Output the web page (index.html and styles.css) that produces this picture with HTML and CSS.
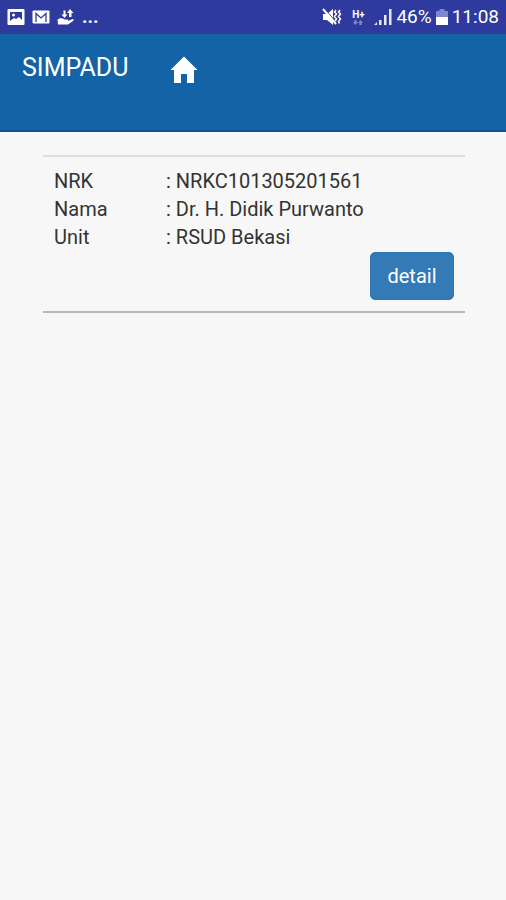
FILE: index.html
```html
<!DOCTYPE html>
<html lang="id">
<head>
    <meta charset="UTF-8">
    <meta name="viewport" content="width=device-width, initial-scale=1.0">
    <title>SIMPADU</title>
    <link rel="stylesheet" href="styles.css">
</head>
<body>

<div class="status-bar">
    <div class="status-left">
        <svg width="18" height="18" viewBox="0 0 18 18">
            <rect x="0.500" y="1" width="17" height="16" rx="1" fill="#fff"/>
            <path d="M3 4h12v8l-3-3-3 2-2-1-4 3z" fill="#2f3a9e"/>
            <circle cx="6.500" cy="7" r="1.500" fill="#fff"/>
        </svg>
        <svg width="18" height="18" viewBox="0 0 18 18">
            <rect x="0.500" y="2.500" width="17" height="13" rx="1" fill="#fff"/>
            <path d="M4 14V5.500l5 4.500 5-4.500V14" fill="none" stroke="#2f3a9e" stroke-width="1.300"/>
        </svg>
        <svg width="18" height="18" viewBox="0 0 18 18" fill="#fff">
            <path d="M0.500 11.500c3-2 5-1.500 7 0h3c1 0 1 1.500 0 1.500h-3.500 4l4.500-2c1.500 0 1.500 1 0.500 2l-5 3.500H1z"/>
            <path d="M8.500 2.500v4h2l-3 3.500-3-3.500h2v-4z"/>
            <path d="M12 9V5h-2l3-4 3.500 4h-2v4z"/>
        </svg>
        <span class="more">...</span>
    </div>
    <div class="status-right">
        <svg width="20" height="18" viewBox="0 0 20 18">
            <path d="M1 6h4l6-5v16l-6-5H1z" fill="#fff"/>
            <path d="M2.500 0.500l12 14" stroke="#2f3a9e" stroke-width="1"/>
            <path d="M1 1l13 15" stroke="#fff" stroke-width="2"/>
            <path d="M14 2l-1.500 2 2 2-2 2.500 2 2.500-1.500 2M18 2l-1.500 2 2 2-2 2.500 2 2.500-2 2.500 1 2" fill="none" stroke="#fff" stroke-width="1.500"/>
        </svg>
        <div class="network">
            <span>H+</span>
            <svg width="10" height="5" viewBox="0 0 10 5" fill="#8189cc">
                <path d="M1.500 0h2v2h1.500L2.500 5 0 2h1.500zM6.500 5h2V3H10L7.500 0 5 3h1.500z"/>
            </svg>
        </div>
        <svg width="18" height="18" viewBox="0 0 18 18" fill="#e6e8f8">
            <path d="M0 17l3-3v3zM5 12h2.500v5H5zM10 7h2.500v10H10zM15 1h2.500v16H15z"/>
        </svg>
        <span class="battery-text">46%</span>
        <svg width="12" height="18" viewBox="0 0 12 18">
            <path d="M3.500 1h5v2H12v14H0V3h3.500z" fill="#7d86cf"/>
            <path d="M0 9h12v8H0z" fill="#fff"/>
        </svg>
        <span class="clock">11:08</span>
    </div>
</div>

<header class="header">
    <h1>SIMPADU</h1>
    <a href="#" class="home" aria-label="Home">
        <svg width="28" height="28" viewBox="0 0 28 28" fill="#fff">
            <path d="M14 0.500L27.500 14H24v13h-7v-9h-6v9H4V14H0.500z"/>
        </svg>
    </a>
</header>

<main class="content">
    <div class="card">
        <table class="info">
            <tr>
                <th scope="row">NRK</th>
                <td>: NRKC101305201561</td>
            </tr>
            <tr>
                <th scope="row">Nama</th>
                <td>: Dr. H. Didik Purwanto</td>
            </tr>
            <tr>
                <th scope="row">Unit</th>
                <td>: RSUD Bekasi</td>
            </tr>
        </table>
        <button type="button" class="btn-detail">detail</button>
    </div>
</main>

</body>
</html>
```

FILE: styles.css
```css
* {
    box-sizing: border-box;
}

body {
    margin: 0;
    background-color: #f7f7f7;
    color: #333;
    font-family: Roboto, sans-serif;
    font-size: 20px;
    line-height: 28px;
}

.status-bar {
    display: flex;
    justify-content: space-between;
    align-items: center;
    height: 34px;
    padding: 0 7px;
    background-color: #2f3a9e;
    color: #fff;
    font-size: 19px;
}

.status-left,
.status-right {
    display: flex;
    align-items: center;
}

.status-left {
    gap: 7px;
}

.status-right {
    gap: 4px;
}

.more {
    font-weight: bold;
}

.network {
    display: flex;
    flex-direction: column;
    align-items: center;
    width: 24px;
    font-size: 10px;
    font-weight: bold;
    line-height: 10px;
}

.header {
    display: flex;
    align-items: flex-start;
    gap: 42px;
    height: 98px;
    padding: 20px 22px;
    background-color: #1463a6;
    border-bottom: 2px solid #0c529a;
    color: #fff;
}

.header h1 {
    margin: 0;
    font-size: 25px;
    font-weight: normal;
    line-height: 28px;
}

.home {
    display: flex;
    padding-top: 2px;
}

.content {
    padding: 23px 41px 23px 43px;
}

.card {
    display: flex;
    flex-direction: column;
    padding: 10px 11px 11px;
    border-top: 2px solid #ddd;
    border-bottom: 2px solid #b8b8b8;
}

.info {
    width: 100%;
    border-collapse: collapse;
}

.info th,
.info td {
    padding: 0;
    font-weight: normal;
    text-align: left;
}

.info th {
    width: 28%;
}

.btn-detail {
    align-self: flex-end;
    width: 84px;
    height: 48px;
    margin-top: 1px;
    padding: 0;
    background-color: #337ab7;
    border: 1px solid #2e75b2;
    border-radius: 5px;
    color: #fff;
    font-family: inherit;
    font-size: 20px;
    cursor: pointer;
}

.btn-detail:hover {
    background-color: #286090;
}
```
